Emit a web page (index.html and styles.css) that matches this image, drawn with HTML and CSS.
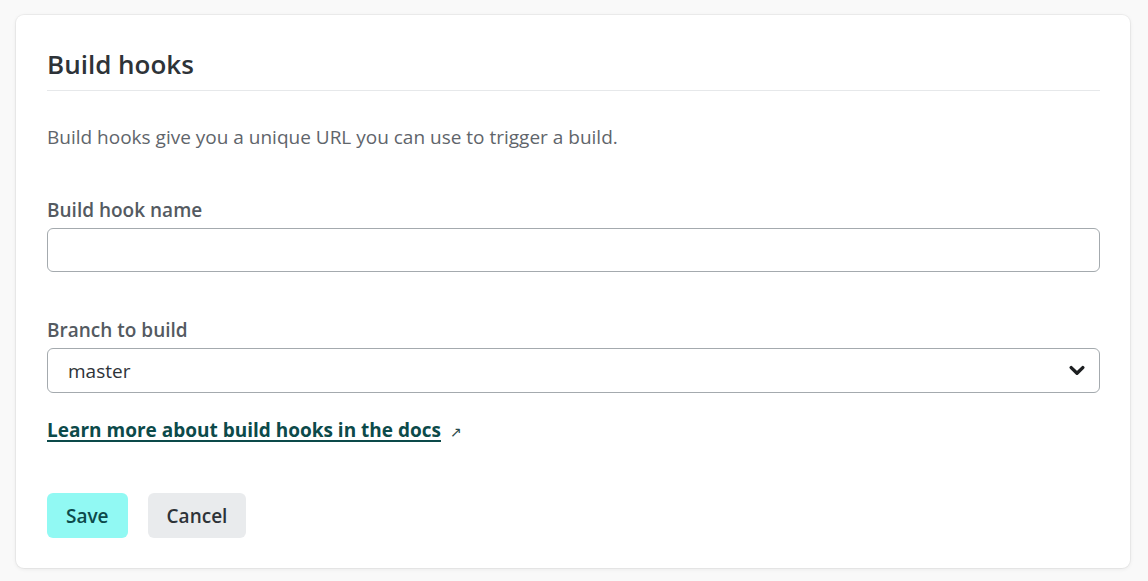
FILE: index.html
```html
<!DOCTYPE html>
<html>
<head>
<meta charset="utf-8">
<link rel="stylesheet" href="styles.css">
</head>
<body>
<div class="page">
  <section class="card">
    <h2 class="card-title">Build hooks</h2>
    <p class="desc">Build hooks give you a unique URL you can use to trigger a build.</p>
    <div class="field">
      <label class="label" for="hook-name">Build hook name</label>
      <input class="input" id="hook-name" type="text">
    </div>
    <div class="field">
      <label class="label" for="branch">Branch to build</label>
      <div class="select">
        <span class="select-value">master</span>
        <svg class="chevron" width="16" height="11" viewBox="0 0 16 11"><path d="M2.2 2.6 L8 8.2 L13.8 2.6" fill="none" stroke="#1d1f21" stroke-width="3.4" stroke-linecap="round" stroke-linejoin="round"/></svg>
      </div>
    </div>
    <a class="docs-link" href="#"><span class="docs-text">Learn more about build hooks in the docs</span><span class="arrow">↗</span></a>
    <div class="actions">
      <button class="btn btn-primary">Save</button>
      <button class="btn btn-secondary">Cancel</button>
    </div>
  </section>
</div>
</body>
</html>
```
FILE: styles.css
```css
html, body {
  margin: 0;
  padding: 0;
}
body {
  background: #f9f9f9;
  font-family: "Open Sans", "Noto Sans", sans-serif;
  color: #2e3338;
}
.page {
  padding: 15px 18px 13px 16px;
}
.card {
  background: #ffffff;
  border-radius: 8px;
  box-shadow: 0 0 0 1px rgba(0,0,0,0.04), 0 1px 4px rgba(0,0,0,0.08);
  padding: 31px 30px 30px 31px;
  min-height: 492px;
}
.card-title {
  margin: 0;
  font-size: 26px;
  font-weight: 600;
  line-height: 36px;
  color: #2e3338;
  padding-bottom: 8px;
  border-bottom: 1px solid #e6e8ea;
}
.desc {
  margin: 33px 0 0 0;
  font-size: 19px;
  line-height: 26px;
  color: #5f656b;
}
.field {
  margin-top: 47px;
  display: flex;
  flex-direction: column;
}
.field + .field {
  margin-top: 45px;
}
.label {
  font-size: 19px;
  font-weight: 600;
  line-height: 26px;
  color: #545a61;
  margin-bottom: 5px;
}
.input {
  box-sizing: border-box;
  height: 44px;
  border: 1px solid #a4aaae;
  border-radius: 6px;
  padding: 0 20px;
  font: inherit;
  background: #fff;
}
.select {
  box-sizing: border-box;
  height: 45px;
  border: 1px solid #a4aaae;
  border-radius: 6px;
  padding: 0 14px 0 20px;
  display: flex;
  align-items: center;
  justify-content: space-between;
}
.select-value {
  font-size: 19px;
  color: #2e3338;
}
.chevron {
  display: block;
}
.docs-link {
  display: inline-flex;
  align-items: baseline;
  margin-top: 24px;
  color: #0c4a4a;
  font-size: 19px;
  line-height: 26px;
  font-weight: 700;
  text-decoration: none;
}
.docs-text {
  text-decoration: underline;
  text-decoration-thickness: 2px;
  text-underline-offset: 3px;
}
.arrow {
  margin-left: 9px;
  font-size: 14px;
  font-weight: 400;
  color: #2a4b4b;
}
.actions {
  margin-top: 48px;
  display: flex;
  gap: 20px;
}
.btn {
  font-family: inherit;
  font-size: 19px;
  font-weight: 600;
  height: 45px;
  border: none;
  border-radius: 6px;
  padding: 0 19px;
  cursor: pointer;
}
.btn-primary {
  background: #91f9f3;
  color: #0c4a4a;
}
.btn-secondary {
  background: #e9ebed;
  color: #2e3338;
}
```
